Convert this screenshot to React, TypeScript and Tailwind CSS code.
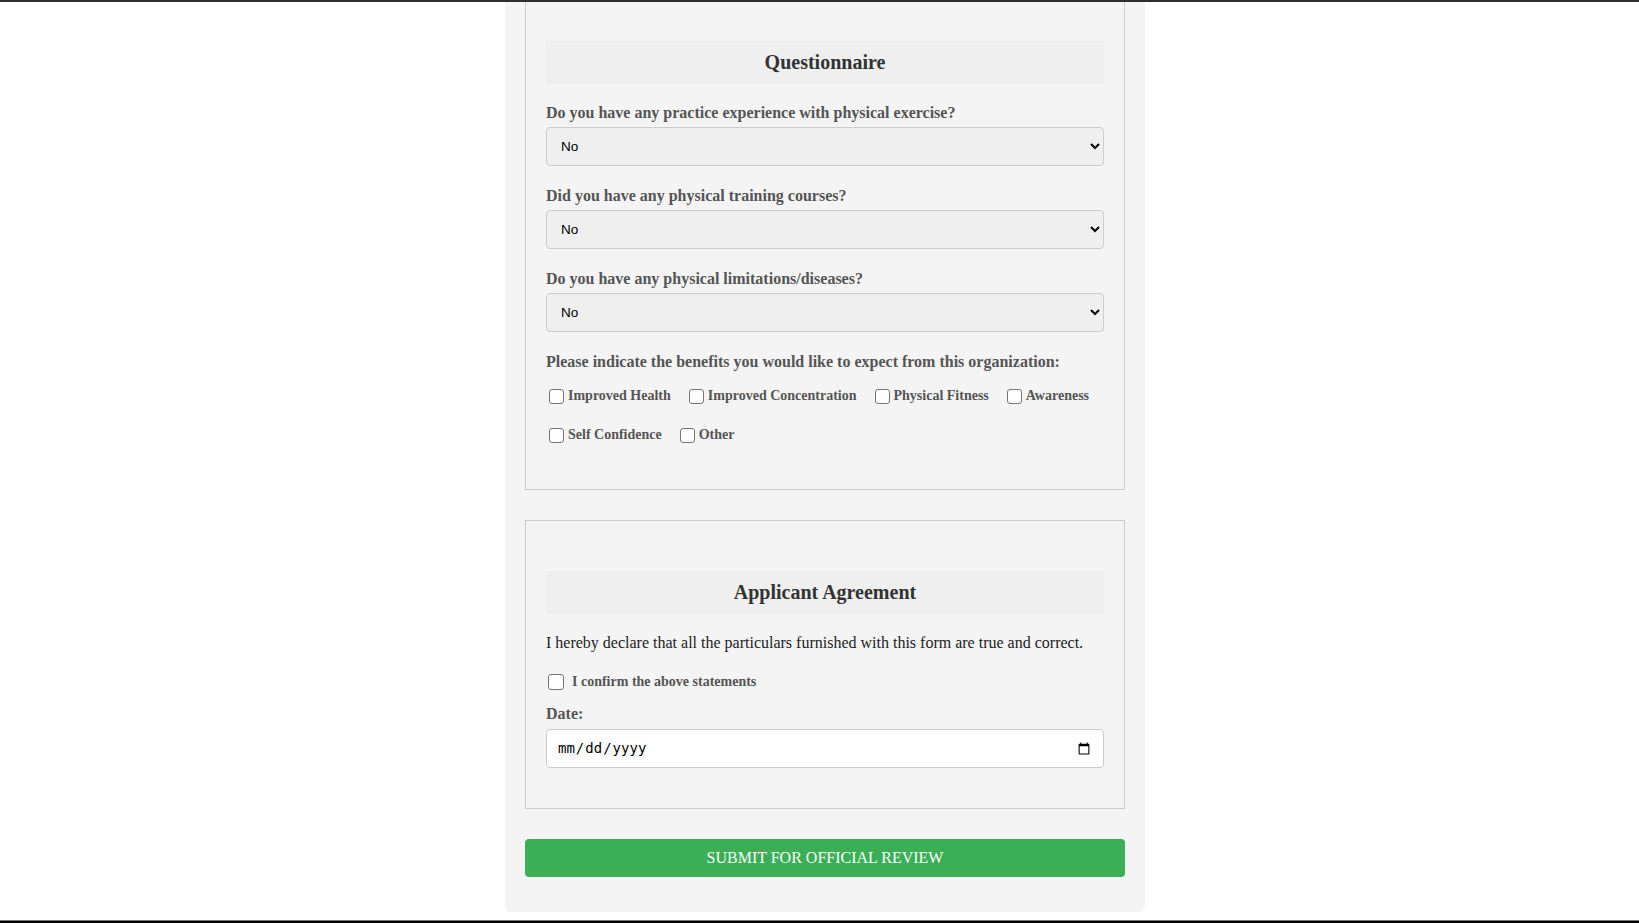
import React from 'react';

const benefits = [
  'Improved Health',
  'Improved Concentration',
  'Physical Fitness',
  'Awareness',
  'Self Confidence',
  'Other',
];

const questions = [
  'Do you have any practice experience with physical exercise?',
  'Did you have any physical training courses?',
  'Do you have any physical limitations/diseases?',
];

function SectionTitle({ children }: { children: React.ReactNode }) {
  return (
    <h2 className="mt-[30px] bg-[#efefef] py-[10px] text-center text-[20px] leading-[23px] font-bold text-[#333]">
      {children}
    </h2>
  );
}

function Check({ label }: { label: string }) {
  return (
    <label className="inline-flex h-5 items-center">
      <input
        type="checkbox"
        className="ml-[3px] mr-[4px] h-[15px] w-[15px] appearance-none rounded-[3px] border border-[#767676] bg-white"
      />
      <span className="text-[14px] leading-5 font-bold text-[#555]">{label}</span>
    </label>
  );
}

export default function App() {
  return (
    <div className="flex h-screen flex-col overflow-hidden bg-white font-['Liberation_Serif',serif]">
      <div className="h-[2px] shrink-0 bg-[#2e2e2e]" />

      <main className="flex flex-1 justify-center overflow-hidden pl-[11px]">
        <div className="-mt-[12px] h-fit w-[640px] rounded-b-[6px] bg-[#f4f4f4] px-5 pb-[35px]">
          {/* Questionnaire */}
          <section className="mb-[30px] border border-[#cccccc] p-5">
            <SectionTitle>Questionnaire</SectionTitle>

            <div className="mt-[20px]">
              {questions.map((q) => (
                <div key={q} className="mb-[21px]">
                  <label className="mb-[5px] block text-[16px] leading-[18px] font-bold text-[#555]">{q}</label>
                  <select className="h-[39px] w-full rounded-[4px] border border-[#cccccc] bg-[#efefef] px-[10px] font-['Liberation_Sans',Arial,sans-serif] text-[13.5px] text-black">
                    <option>No</option>
                    <option>Yes</option>
                  </select>
                </div>
              ))}

              <label className="block text-[16px] leading-[18px] font-bold text-[#555]">
                Please indicate the benefits you would like to expect from this organization:
              </label>
              <div className="mt-[15px] mb-[24px] flex flex-wrap gap-x-[15px] gap-y-[19px]">
                {benefits.map((b) => (
                  <Check key={b} label={b} />
                ))}
              </div>
            </div>
          </section>

          {/* Applicant Agreement */}
          <section className="mb-[30px] border border-[#cccccc] p-5">
            <SectionTitle>Applicant Agreement</SectionTitle>

            <p className="mt-5 text-[16px] leading-[18px] text-[#222]">
              I hereby declare that all the particulars furnished with this form are true and correct.
            </p>

            <label className="mt-5 flex h-5 items-center">
              <input
                type="checkbox"
                className="ml-[2px] mr-2 h-4 w-4 appearance-none rounded-[3px] border border-[#767676] bg-white"
              />
              <span className="text-[14px] leading-5 font-bold text-[#555]">I confirm the above statements</span>
            </label>

            <label className="mt-[13px] mb-[6px] block text-[16px] leading-[18px] font-bold text-[#555]">Date:</label>
            <input
              type="date"
              className="mb-5 h-[39px] w-full rounded-[4px] border border-[#cccccc] bg-white px-[10px] font-['DejaVu_Sans_Mono',monospace] text-[14px] text-black"
            />
          </section>

          <button className="h-[38px] w-full rounded-[4px] bg-[#3dae58] text-[16px] text-[#f4fff6] uppercase">
            Submit for official review
          </button>
        </div>
      </main>

      <div className="h-[3px] shrink-0 border-t border-[#777] bg-black" />
    </div>
  );
}
